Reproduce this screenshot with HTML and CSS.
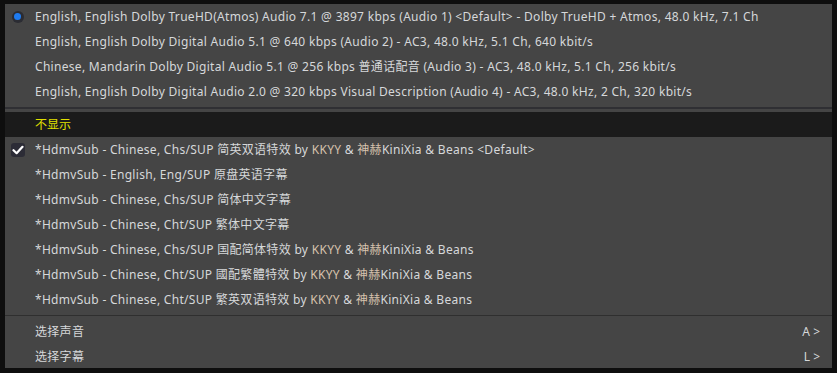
FILE: index.html
```html
<!DOCTYPE html>
<html lang="zh">
<head>
<meta charset="utf-8">
<link rel="stylesheet" href="styles.css">
</head>
<body>
<div class="menu">
  <div class="row"><span class="icon"><span class="radio"><span class="dot"></span></span></span><span class="label">English, English Dolby TrueHD(Atmos) Audio 7.1 @ 3897 kbps (Audio 1) &lt;Default&gt; - Dolby TrueHD + Atmos, 48.0 kHz, 7.1 Ch</span></div>
  <div class="row"><span class="icon"></span><span class="label">English, English Dolby Digital Audio 5.1 @ 640 kbps (Audio 2) - AC3, 48.0 kHz, 5.1 Ch, 640 kbit/s</span></div>
  <div class="row"><span class="icon"></span><span class="label">Chinese, Mandarin Dolby Digital Audio 5.1 @ 256 kbps 普通话配音 (Audio 3) - AC3, 48.0 kHz, 5.1 Ch, 256 kbit/s</span></div>
  <div class="row"><span class="icon"></span><span class="label">English, English Dolby Digital Audio 2.0 @ 320 kbps Visual Description (Audio 4) - AC3, 48.0 kHz, 2 Ch, 320 kbit/s</span></div>
  <div class="sep sep-top"></div>
  <div class="row active"><span class="icon"></span><span class="label">不显示</span></div>
  <div class="row"><span class="icon"><span class="check"><svg width="12" height="10" viewBox="0 0 12 10"><path d="M1.5 5.2 L4.6 8.2 L10.5 1.8" fill="none" stroke="#ffffff" stroke-width="2.2" stroke-linecap="round" stroke-linejoin="round"/></svg></span></span><span class="label">*HdmvSub - Chinese, Chs/SUP 简英双语特效 by <span class="warm">KKYY</span> &amp; <span class="warm">神赫</span>KiniXia &amp; Beans &lt;Default&gt;</span></div>
  <div class="row"><span class="icon"></span><span class="label">*HdmvSub - English, Eng/SUP 原盘英语字幕</span></div>
  <div class="row"><span class="icon"></span><span class="label">*HdmvSub - Chinese, Chs/SUP 简体中文字幕</span></div>
  <div class="row"><span class="icon"></span><span class="label">*HdmvSub - Chinese, Cht/SUP 繁体中文字幕</span></div>
  <div class="row"><span class="icon"></span><span class="label">*HdmvSub - Chinese, Chs/SUP 国配简体特效 by <span class="warm">KKYY</span> &amp; <span class="warm">神赫</span>KiniXia &amp; Beans</span></div>
  <div class="row"><span class="icon"></span><span class="label">*HdmvSub - Chinese, Cht/SUP 國配繁體特效 by <span class="warm">KKYY</span> &amp; <span class="warm">神赫</span>KiniXia &amp; Beans</span></div>
  <div class="row"><span class="icon"></span><span class="label">*HdmvSub - Chinese, Cht/SUP 繁英双语特效 by <span class="warm">KKYY</span> &amp; <span class="warm">神赫</span>KiniXia &amp; Beans</span></div>
  <div class="sep sep-bottom"></div>
  <div class="row"><span class="icon"></span><span class="label">选择声音</span><span class="key">A &gt;</span></div>
  <div class="row"><span class="icon"></span><span class="label">选择字幕</span><span class="key">L &gt;</span></div>
</div>
</body>
</html>
```
FILE: styles.css
```css
html, body {
  margin: 0;
  padding: 0;
  background: #0e0e0e;
  width: 837px;
  height: 373px;
  overflow: hidden;
}
body {
  padding: 4px 0 0 5px;
  box-sizing: border-box;
  font-family: "Noto Sans", "Noto Sans CJK SC", sans-serif;
  font-size: 12px;
}
.menu {
  width: 827px;
  height: 364px;
  background: #454545;
  display: flex;
  flex-direction: column;
}
.row {
  height: 25px;
  display: flex;
  align-items: center;
  color: #d6d8da;
  white-space: nowrap;
}
.icon {
  width: 30px;
  flex: none;
  display: flex;
  align-items: center;
  justify-content: center;
  padding-right: 5px;
  box-sizing: border-box;
}
.label {
  flex: 1;
  line-height: 25px;
  letter-spacing: 0.3px;
}
.warm {
  color: #d6c2ad;
}
.radio {
  width: 12px;
  height: 12px;
  border-radius: 50%;
  background: #2b2c33;
  display: flex;
  align-items: center;
  justify-content: center;
}
.dot {
  width: 7px;
  height: 7px;
  border-radius: 50%;
  background: #1e7bf0;
}
.check {
  width: 14px;
  height: 14px;
  border-radius: 3px;
  background: #2c2c36;
  display: flex;
  align-items: center;
  justify-content: center;
}
.active {
  background: #1b1b1b;
}
.active .label {
  color: #e2e000;
  letter-spacing: 0;
}
.sep {
  flex: none;
}
.sep-top {
  height: 8px;
  background: linear-gradient(#454545 0 3px, #2f2f33 3px 5px, #454545 5px);
}
.sep-bottom {
  height: 7px;
  background: linear-gradient(#454545 0 3px, #2f2f2f 3px 4px, #454545 4px);
}
.key {
  width: 40px;
  flex: none;
  text-align: right;
  padding-right: 12px;
  color: #d6d8da;
}
```
